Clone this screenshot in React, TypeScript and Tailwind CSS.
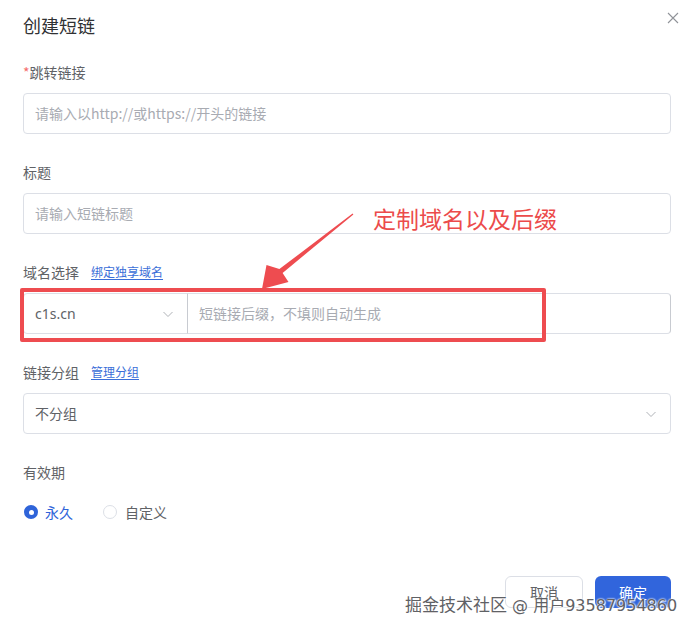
import React from "react";

const Chevron = () => (
  <svg width="12" height="12" viewBox="0 0 12 12" fill="none">
    <path d="M1.5 4 L6 8.5 L10.5 4" stroke="#b0b3b8" strokeWidth="1" />
  </svg>
);

export default function App() {
  const label = "text-[14px] leading-[22px] text-[#606266]";
  const box = "mt-[10px] h-[41px] border border-[#dcdfe6] rounded-[4px] flex items-center text-[14px]";
  return (
    <div className="relative w-[692px] h-[632px] bg-white overflow-hidden font-['Noto_Sans_CJK_SC',sans-serif]">
      <div className="flex flex-col pl-[23px] pr-[21px] pt-[13px]">
        <div className="flex justify-between items-start">
          <div className="text-[18px] leading-[24px] text-[#303133]">创建短链</div>
          <svg className="-mr-[8px] mt-[-1px]" width="12" height="12" viewBox="0 0 12 12">
            <path d="M1 1 L11 11 M11 1 L1 11" stroke="#909399" strokeWidth="1.1" />
          </svg>
        </div>

        <div className="mt-[24px]">
          <div className={label}>
            <span className="text-[#f56c6c]">*</span>跳转链接
          </div>
          <div className={`${box} px-[11px] text-[#a8abb2]`}>请输入以http://或https://开头的链接</div>
        </div>

        <div className="mt-[27px]">
          <div className={label}>标题</div>
          <div className={`${box} px-[11px] text-[#a8abb2]`}>请输入短链标题</div>
        </div>

        <div className="mt-[27px]">
          <div className={`${label} flex items-center`}>
            <span>域名选择</span>
            <span className="ml-[12px] text-[12px] text-[#3a6ed8] underline underline-offset-2">绑定独享域名</span>
          </div>
          <div className="mt-[10px] h-[41px] flex text-[14px]">
            <div className="w-[165px] border border-[#dcdfe6] rounded-l-[4px] flex items-center justify-between pl-[11px] pr-[13px] text-[#606266]">
              <span className="font-['Noto_Sans','Noto_Sans_CJK_SC',sans-serif]">c1s.cn</span>
              <Chevron />
            </div>
            <div className="flex-1 border border-l-[#c8cbd1] border-y-[#dcdfe6] border-r-[#c8cbd1] -ml-px rounded-r-[4px] flex items-center px-[11px] text-[#a8abb2]">
              短链接后缀，不填则自动生成
            </div>
          </div>
        </div>

        <div className="mt-[27px]">
          <div className={`${label} flex items-center`}>
            <span>链接分组</span>
            <span className="ml-[12px] text-[12px] text-[#3a6ed8] underline underline-offset-2">管理分组</span>
          </div>
          <div className={`${box} justify-between pl-[11px] pr-[13px] text-[#606266]`}>
            <span>不分组</span>
            <Chevron />
          </div>
        </div>

        <div className="mt-[27px]">
          <div className={label}>有效期</div>
          <div className="mt-[18px] flex items-center text-[14px] leading-[22px]">
            <div className="flex items-center">
              <span className="w-[14px] h-[14px] rounded-full bg-[#2f64d9] flex items-center justify-center ml-px">
                <span className="w-[5px] h-[5px] rounded-full bg-white" />
              </span>
              <span className="ml-[7px] text-[#2f64d9]">永久</span>
            </div>
            <div className="flex items-center ml-[30px]">
              <span className="w-[14px] h-[14px] rounded-full border border-[#dcdfe6] bg-white" />
              <span className="ml-[8px] text-[#606266]">自定义</span>
            </div>
          </div>
        </div>

        <div className="mt-[53px] flex justify-end gap-[12px]">
          <div className="w-[78px] h-[32px] border border-[#dcdfe6] rounded-[6px] flex items-center justify-center text-[14px] text-[#606266]">取消</div>
          <div className="w-[76px] h-[32px] bg-[#3165dc] rounded-[6px] flex items-center justify-center text-[14px] text-white">确定</div>
        </div>
      </div>

      {/* annotation overlay */}
      <div className="absolute left-[20px] top-[288px] w-[526px] h-[54px] border-[4px] border-[#ee4c50] rounded-[2px]" />
      <svg className="absolute left-0 top-0" width="692" height="632" viewBox="0 0 692 632">
        <polygon
          points="353.4,214.5 282.6,272.9 288.5,282 262,289 266.5,265 279.4,269.1 352.6,213.5"
          fill="#ee4c50"
        />
      </svg>
      <div className="absolute left-[373px] top-[203px] text-[23px] leading-[30px] text-[#ec4b4b] whitespace-nowrap">
        定制域名以及后缀
      </div>

      <div className="absolute left-[405px] top-[593px] font-['DejaVu_Sans','Noto_Sans_CJK_SC',sans-serif] text-[16px] leading-[24px] text-[#5f6165] whitespace-nowrap [text-shadow:0_0_2px_#fff,0_0_2px_#fff,1px_1px_1px_#fff]">
        <span className="text-[17px]">掘金技术社区</span> @ 用户93587954860
      </div>
    </div>
  );
}
